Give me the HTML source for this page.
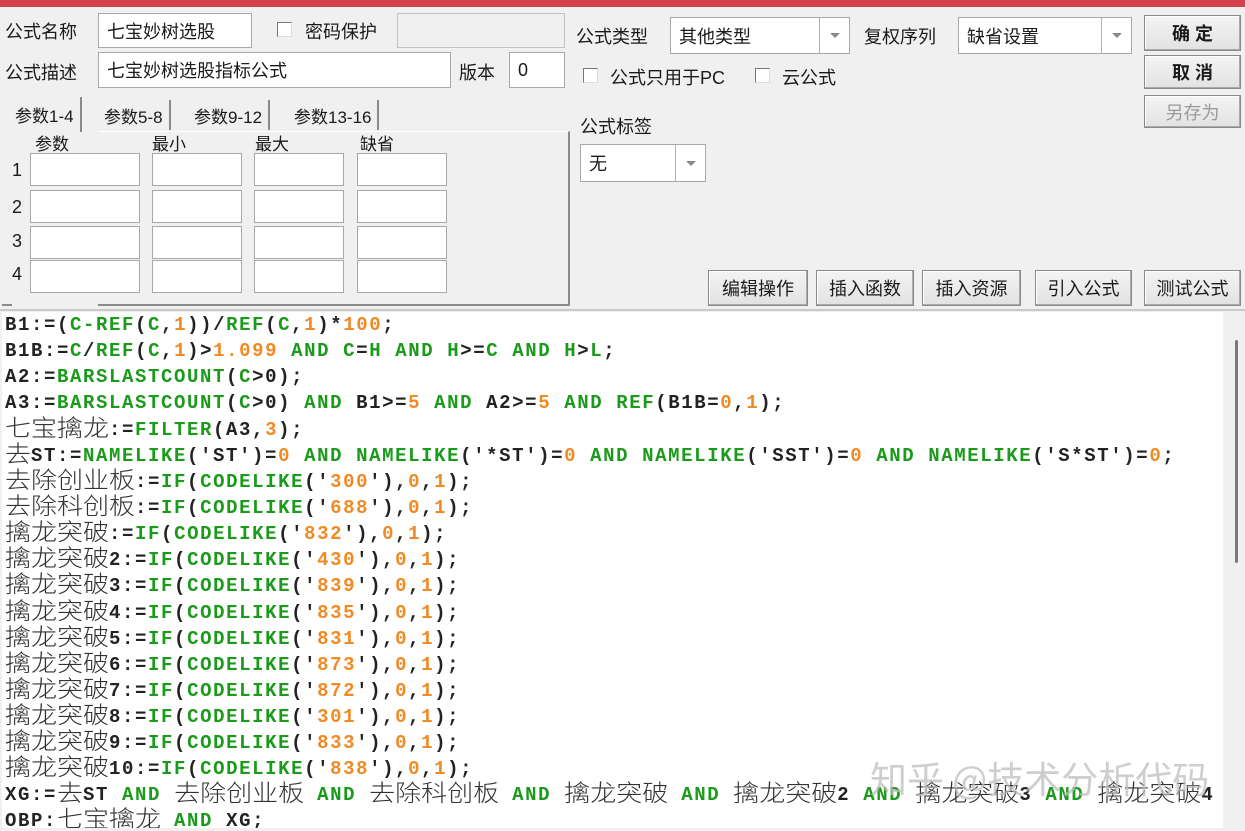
<!DOCTYPE html>
<html><head><meta charset="utf-8"><style>
*{margin:0;padding:0;box-sizing:border-box}
body{width:1245px;height:831px;overflow:hidden;background:#f0f0f0;position:relative;font-family:"Liberation Sans","Noto Sans CJK SC",sans-serif;font-size:18px;color:#1a1a1a}
.a{position:absolute;white-space:nowrap}
.red{left:0;top:0;width:1245px;height:7px;background:#d3414b}
.in{position:absolute;background:#fff;border:1px solid #a8a8a8;padding:0 8px;display:flex;align-items:center}
.dis{background:#f0f0f0;border:1px solid #c2c2c2}
.cb{position:absolute;width:15px;height:15px;background:#fff;border:1px solid #777;border-right-color:#ddd;border-bottom-color:#ddd}
.btn{position:absolute;background:linear-gradient(#f4f4f4,#e2e2e2);border:1px solid #8a8a8a;box-shadow:inset -1px -1px 0 #aaa,inset 1px 1px 0 #fff;display:flex;align-items:center;justify-content:center;font-size:18px}
.arr{position:absolute;top:0;bottom:0;border-left:1px solid #b0b0b0;display:flex;align-items:center;justify-content:center}
.arr:after{content:"";border-left:5px solid transparent;border-right:5px solid transparent;border-top:5px solid #8a8a8a}
.tab{position:absolute;top:100px;height:30px;font-size:17px;display:flex;align-items:center;padding:0 6px;border-right:2px solid #8a8a8a}
#ed{position:absolute;left:2px;top:312px;width:1221px;height:516px;background:#fff;overflow:hidden}
#ed div{height:26.05px;line-height:26px;font-family:"Liberation Mono",monospace;font-weight:bold;font-size:19px;letter-spacing:1.6px;color:#222;padding-left:3px;white-space:nowrap}
.g{color:#1c9a1c}.o{color:#f08a24}
.c{font-family:"Noto Sans CJK SC",sans-serif;font-weight:300;font-size:26px;letter-spacing:0;color:#333;display:inline-block;transform:scaleY(0.9);line-height:22px;vertical-align:-2px}
</style></head><body>
<div class="a red"></div>
<div class="a" style="left:5px;top:18px">公式名称</div>
<div class="in" style="left:98px;top:13px;width:154px;height:35px">七宝妙树选股</div>
<div class="cb" style="left:277px;top:22px"></div>
<div class="a" style="left:305px;top:18px">密码保护</div>
<div class="in dis" style="left:397px;top:13px;width:168px;height:35px"></div>
<div class="a" style="left:5px;top:59px">公式描述</div>
<div class="in" style="left:98px;top:52px;width:353px;height:36px">七宝妙树选股指标公式</div>
<div class="a" style="left:459px;top:59px">版本</div>
<div class="in" style="left:509px;top:52px;width:56px;height:36px">0</div>

<div class="tab" style="left:9px;top:97px;height:35px;border-right:2px solid #8a8a8a">参数1-4</div>
<div class="tab" style="left:98px">参数5-8</div>
<div class="tab" style="left:188px">参数9-12</div>
<div class="tab" style="left:288px">参数13-16</div>
<div class="a" style="left:98px;top:131px;width:472px;height:175px;border-top:1px solid #fff;border-right:2px solid #8a8a8a;border-bottom:2px solid #8a8a8a"></div>
<div class="a" style="left:2px;top:131px;width:10px;height:175px;border-bottom:2px solid #8a8a8a"></div>
<div class="a" style="left:35px;top:130px;font-size:17px">参数</div>
<div class="a" style="left:152px;top:130px;font-size:17px">最小</div>
<div class="a" style="left:255px;top:130px;font-size:17px">最大</div>
<div class="a" style="left:360px;top:130px;font-size:17px">缺省</div>
<div class="a" style="left:12px;top:160px">1</div><div class="a" style="left:12px;top:197px">2</div><div class="a" style="left:12px;top:231px">3</div><div class="a" style="left:12px;top:264px">4</div>
<div class="in" style="left:30px;top:153px;width:110px;height:33px"></div><div class="in" style="left:152px;top:153px;width:90px;height:33px"></div><div class="in" style="left:254px;top:153px;width:90px;height:33px"></div><div class="in" style="left:357px;top:153px;width:90px;height:33px"></div>
<div class="in" style="left:30px;top:190px;width:110px;height:33px"></div><div class="in" style="left:152px;top:190px;width:90px;height:33px"></div><div class="in" style="left:254px;top:190px;width:90px;height:33px"></div><div class="in" style="left:357px;top:190px;width:90px;height:33px"></div>
<div class="in" style="left:30px;top:226px;width:110px;height:33px"></div><div class="in" style="left:152px;top:226px;width:90px;height:33px"></div><div class="in" style="left:254px;top:226px;width:90px;height:33px"></div><div class="in" style="left:357px;top:226px;width:90px;height:33px"></div>
<div class="in" style="left:30px;top:260px;width:110px;height:33px"></div><div class="in" style="left:152px;top:260px;width:90px;height:33px"></div><div class="in" style="left:254px;top:260px;width:90px;height:33px"></div><div class="in" style="left:357px;top:260px;width:90px;height:33px"></div>

<div class="a" style="left:576px;top:23px">公式类型</div>
<div class="in" style="left:670px;top:17px;width:180px;height:37px">其他类型<div class="arr" style="left:148px;width:31px"></div></div>
<div class="a" style="left:864px;top:23px">复权序列</div>
<div class="in" style="left:958px;top:17px;width:174px;height:37px">缺省设置<div class="arr" style="left:142px;width:31px"></div></div>
<div class="btn" style="left:1144px;top:15px;width:97px;height:36px;font-weight:bold">确 定</div>
<div class="btn" style="left:1144px;top:55px;width:97px;height:34px;font-weight:bold">取 消</div>
<div class="btn" style="left:1144px;top:95px;width:97px;height:33px;color:#9a9a9a">另存为</div>
<div class="cb" style="left:583px;top:68px"></div>
<div class="a" style="left:610px;top:64px">公式只用于PC</div>
<div class="cb" style="left:755px;top:68px"></div>
<div class="a" style="left:782px;top:64px">云公式</div>
<div class="a" style="left:580px;top:113px">公式标签</div>
<div class="in" style="left:580px;top:144px;width:126px;height:38px">无<div class="arr" style="left:94px;width:31px"></div></div>
<div class="btn" style="left:708px;top:270px;width:100px;height:36px">编辑操作</div>
<div class="btn" style="left:816px;top:270px;width:98px;height:36px">插入函数</div>
<div class="btn" style="left:922px;top:270px;width:99px;height:36px">插入资源</div>
<div class="btn" style="left:1035px;top:270px;width:97px;height:36px">引入公式</div>
<div class="btn" style="left:1144px;top:270px;width:97px;height:36px">测试公式</div>
<div class="a" style="left:0;top:309px;width:1245px;height:2px;background:#c8c8c8"></div>

<div id="ed">
<div>B1:=(<span class="g">C-REF</span>(<span class="g">C</span>,<span class="o">1</span>))/<span class="g">REF</span>(<span class="g">C</span>,<span class="o">1</span>)*<span class="o">100</span>;</div>
<div>B1B:=<span class="g">C</span>/<span class="g">REF</span>(<span class="g">C</span>,<span class="o">1</span>)&gt;<span class="o">1.099</span> <span class="g">AND C</span>=<span class="g">H AND H</span>&gt;=<span class="g">C AND H</span>&gt;<span class="g">L</span>;</div>
<div>A2:=<span class="g">BARSLASTCOUNT</span>(<span class="g">C</span>&gt;0);</div>
<div>A3:=<span class="g">BARSLASTCOUNT</span>(<span class="g">C</span>&gt;0) <span class="g">AND</span> B1&gt;=<span class="o">5</span> <span class="g">AND</span> A2&gt;=<span class="o">5</span> <span class="g">AND REF</span>(B1B=<span class="o">0</span>,<span class="o">1</span>);</div>
<div><span class="c">七宝擒龙</span>:=<span class="g">FILTER</span>(A3,<span class="o">3</span>);</div>
<div><span class="c">去</span>ST:=<span class="g">NAMELIKE</span>('ST')=<span class="o">0</span> <span class="g">AND NAMELIKE</span>('*ST')=<span class="o">0</span> <span class="g">AND NAMELIKE</span>('SST')=<span class="o">0</span> <span class="g">AND NAMELIKE</span>('S*ST')=<span class="o">0</span>;</div>
<div><span class="c">去除创业板</span>:=<span class="g">IF</span>(<span class="g">CODELIKE</span>('<span class="o">300</span>'),<span class="o">0</span>,<span class="o">1</span>);</div>
<div><span class="c">去除科创板</span>:=<span class="g">IF</span>(<span class="g">CODELIKE</span>('<span class="o">688</span>'),<span class="o">0</span>,<span class="o">1</span>);</div>
<div><span class="c">擒龙突破</span>:=<span class="g">IF</span>(<span class="g">CODELIKE</span>('<span class="o">832</span>'),<span class="o">0</span>,<span class="o">1</span>);</div>
<div><span class="c">擒龙突破</span>2:=<span class="g">IF</span>(<span class="g">CODELIKE</span>('<span class="o">430</span>'),<span class="o">0</span>,<span class="o">1</span>);</div>
<div><span class="c">擒龙突破</span>3:=<span class="g">IF</span>(<span class="g">CODELIKE</span>('<span class="o">839</span>'),<span class="o">0</span>,<span class="o">1</span>);</div>
<div><span class="c">擒龙突破</span>4:=<span class="g">IF</span>(<span class="g">CODELIKE</span>('<span class="o">835</span>'),<span class="o">0</span>,<span class="o">1</span>);</div>
<div><span class="c">擒龙突破</span>5:=<span class="g">IF</span>(<span class="g">CODELIKE</span>('<span class="o">831</span>'),<span class="o">0</span>,<span class="o">1</span>);</div>
<div><span class="c">擒龙突破</span>6:=<span class="g">IF</span>(<span class="g">CODELIKE</span>('<span class="o">873</span>'),<span class="o">0</span>,<span class="o">1</span>);</div>
<div><span class="c">擒龙突破</span>7:=<span class="g">IF</span>(<span class="g">CODELIKE</span>('<span class="o">872</span>'),<span class="o">0</span>,<span class="o">1</span>);</div>
<div><span class="c">擒龙突破</span>8:=<span class="g">IF</span>(<span class="g">CODELIKE</span>('<span class="o">301</span>'),<span class="o">0</span>,<span class="o">1</span>);</div>
<div><span class="c">擒龙突破</span>9:=<span class="g">IF</span>(<span class="g">CODELIKE</span>('<span class="o">833</span>'),<span class="o">0</span>,<span class="o">1</span>);</div>
<div><span class="c">擒龙突破</span>10:=<span class="g">IF</span>(<span class="g">CODELIKE</span>('<span class="o">838</span>'),<span class="o">0</span>,<span class="o">1</span>);</div>
<div>XG:=<span class="c">去</span>ST <span class="g">AND</span> <span class="c">去除创业板</span> <span class="g">AND</span> <span class="c">去除科创板</span> <span class="g">AND</span> <span class="c">擒龙突破</span> <span class="g">AND</span> <span class="c">擒龙突破</span>2 <span class="g">AND</span> <span class="c">擒龙突破</span>3 <span class="g">AND</span> <span class="c">擒龙突破</span>4</div>
<div>OBP:<span class="c">七宝擒龙</span> <span class="g">AND</span> XG;</div>
</div>
<div class="a" style="left:870px;top:750px;font-family:'Noto Sans CJK SC',sans-serif;font-size:37px;color:rgba(190,190,190,0.75)">知乎 @技术分析代码</div>
<div class="a" style="left:1223px;top:312px;width:22px;height:519px;background:#f0f0f0"></div>
<div class="a" style="left:1235px;top:340px;width:3px;height:223px;background:#7a7a7a;border-radius:2px"></div>
</body></html>
